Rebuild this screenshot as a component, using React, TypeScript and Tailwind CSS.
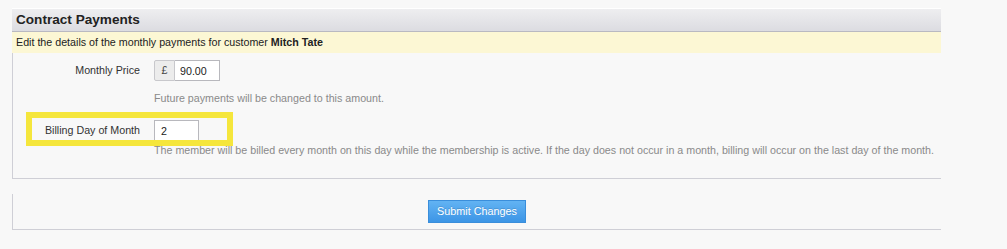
export default function App() {
  return (
    <div className="relative h-[249px] w-[1007px] bg-[#f8f8f8] px-3 pt-2 font-['Liberation_Sans',Arial,sans-serif] text-[#333]">
      <div className="w-[929px]">
        <div className="flex h-[24px] items-center border-t border-b border-t-white border-b-[#b9b9c1] bg-gradient-to-b from-[#eeeef0] to-[#dcdce1] pl-1 text-[13.6px] font-bold text-[#222]">
          Contract Payments
        </div>
        <div className="flex h-[21px] items-center bg-[#fcf7d4] pl-1 text-[10.7px] text-[#222]">
          Edit the details of the monthly payments for customer&nbsp;<b>Mitch Tate</b>
        </div>

        <div className="border-b border-l border-[#cfcfd6] pb-[21px] pt-[7px] text-[10.7px]">
          <div className="flex h-[21px] items-center">
            <label className="w-[127px] text-right">Monthly Price</label>
            <div className="ml-[14px] flex h-[21px]">
              <span className="flex w-[21px] items-center justify-center rounded-l-[2px] border border-[#c8c8cc] bg-[#ececec] text-[#444]">
                £
              </span>
              <input
                readOnly
                value="90.00"
                className="h-[21px] w-[45px] border border-l-0 border-[#b8b8bd] bg-white pl-[5px] text-[10.7px] text-[#222] outline-none"
              />
            </div>
          </div>
          <p className="ml-[141px] mt-[10px] text-[10.7px] leading-[14px] text-[#8a8a8a]">
            Future payments will be changed to this amount.
          </p>

          <div className="mt-[15px] flex h-[21px] items-center">
            <label className="w-[127px] text-right">Billing Day of Month</label>
            <input
              readOnly
              value="2"
              className="ml-[14px] h-[21px] w-[45px] border border-[#b8b8bd] bg-white pl-[6px] text-[10.7px] text-[#222] outline-none"
            />
          </div>
          <p className="ml-[141px] mt-[2px] whitespace-nowrap text-[10.7px] leading-[14px] text-[#8a8a8a]">
            The member will be billed every month on this day while the membership is active. If the day does not occur in a month, billing will occur on the last day of the month.
          </p>
        </div>

        <div className="mt-[15px] flex justify-center border-b border-l border-[#cfcfd6] pb-[6px] pt-[6px]">
          <button className="h-[23px] w-[98px] border border-[#3a8edb] bg-gradient-to-b from-[#62b3f3] to-[#3c95e6] text-[10.8px] text-white [text-shadow:0_-1px_0_rgba(0,0,0,0.15)]">
            Submit Changes
          </button>
        </div>
      </div>

      {/* annotation highlight */}
      <div className="pointer-events-none absolute left-[26px] top-[112px] h-[34px] w-[207px] border-[6px] border-[#f5e63c]" />
    </div>
  )
}
